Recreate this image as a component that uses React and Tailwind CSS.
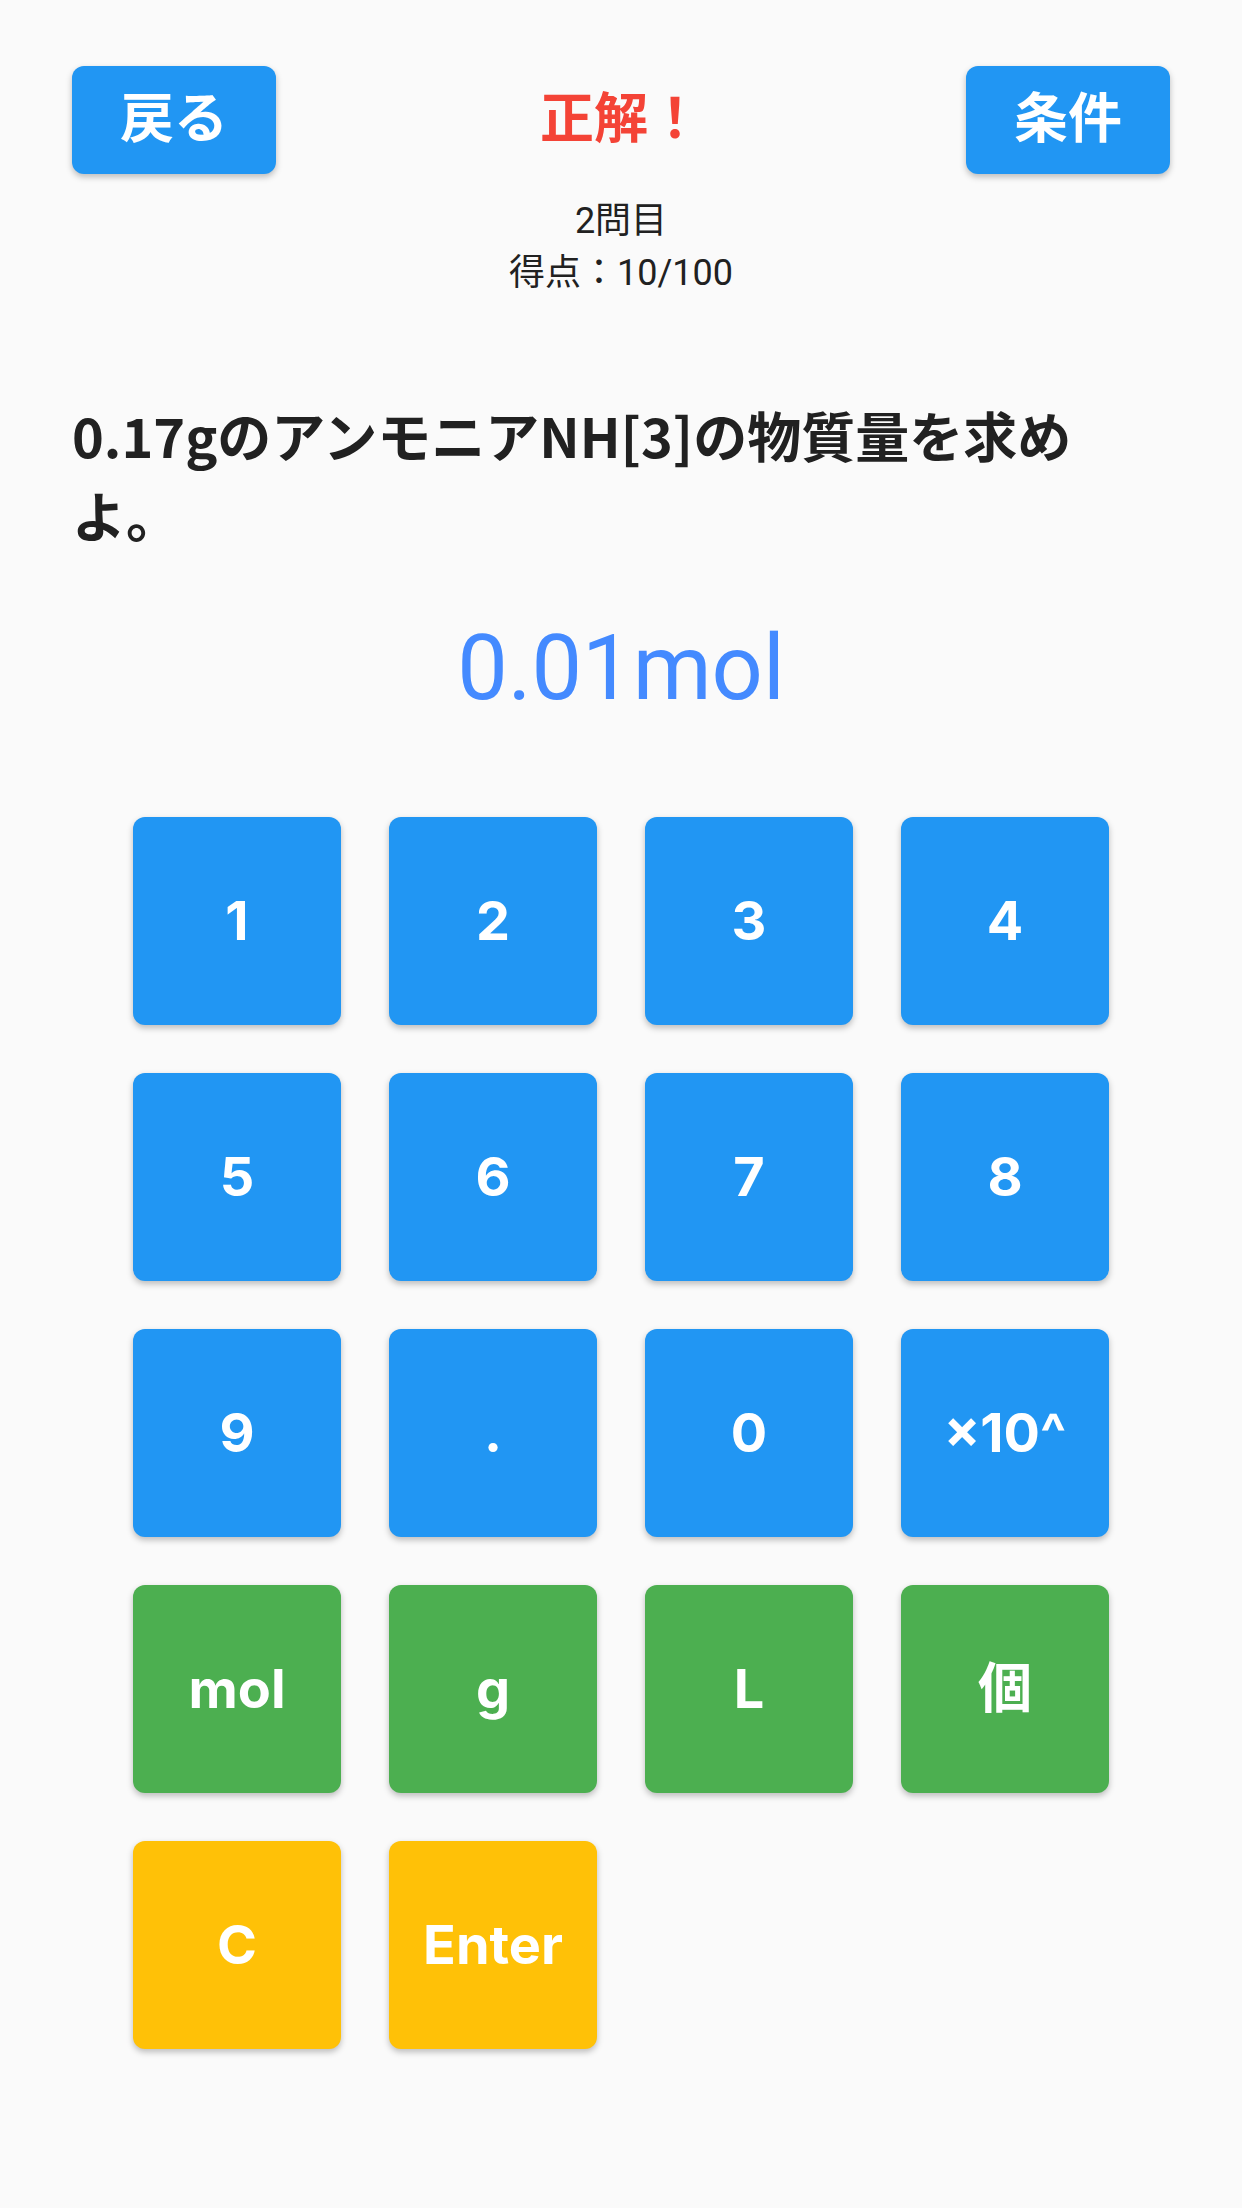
const KEYS = [
  { label: '1', tone: 'blue' },
  { label: '2', tone: 'blue' },
  { label: '3', tone: 'blue' },
  { label: '4', tone: 'blue' },
  { label: '5', tone: 'blue' },
  { label: '6', tone: 'blue' },
  { label: '7', tone: 'blue' },
  { label: '8', tone: 'blue' },
  { label: '9', tone: 'blue' },
  { label: '.', tone: 'blue' },
  { label: '0', tone: 'blue' },
  { label: '×10^', tone: 'blue' },
  { label: 'mol', tone: 'green' },
  { label: 'g', tone: 'green' },
  { label: 'L', tone: 'green' },
  { label: '個', tone: 'green' },
  { label: 'C', tone: 'amber' },
  { label: 'Enter', tone: 'amber' },
];

const TONE = {
  blue: 'bg-[#2196f3]',
  green: 'bg-[#4caf50]',
  amber: 'bg-[#ffc107]',
};

function HeadButton({ children }) {
  return (
    <button className="w-[204px] h-[108px] rounded-[12px] bg-[#2196f3] text-white text-[54px] font-bold leading-none shadow-[0_3px_6px_rgba(0,0,0,0.25)] flex items-center justify-center">
      {children}
    </button>
  );
}

export default function App() {
  return (
    <div className="min-h-screen w-full bg-[#fafafa] font-['Roboto','Noto_Sans_CJK_JP',sans-serif] text-[#212121]">
      {/* ヘッダー */}
      <div className="flex items-center justify-between px-[72px] pt-[66px]">
        <HeadButton>戻る</HeadButton>
        <span className="text-[54px] font-bold text-[#f44336] leading-none">正解！</span>
        <HeadButton>条件</HeadButton>
      </div>

      <div className="mt-[21px] text-center text-[36px] leading-[52px]">
        <p>2問目</p>
        <p>得点：10/100</p>
      </div>

      {/* 問題文 */}
      <p className="mt-[96px] px-[72px] font-['Noto_Sans_CJK_JP',sans-serif] text-[54px] font-bold leading-[80px]">
        0.17gのアンモニアNH[3]の物質量を求め<br />よ。
      </p>

      {/* 入力中の答え */}
      <p className="mt-[61px] text-center text-[90px] leading-[106px] text-[#448aff]">0.01mol</p>

      {/* キーパッド */}
      <div className="mt-[95px] mx-auto w-fit grid grid-cols-4 gap-[48px] pb-[100px]">
        {KEYS.map(k => (
          <button
            key={k.label}
            className={`w-[208px] h-[208px] rounded-[12px] ${TONE[k.tone]} font-['Inter','Noto_Sans_CJK_JP',sans-serif] text-white text-[54px] font-bold leading-none shadow-[0_3px_6px_rgba(0,0,0,0.25)] flex items-center justify-center`}
          >
            {k.label}
          </button>
        ))}
      </div>
    </div>
  );
}
